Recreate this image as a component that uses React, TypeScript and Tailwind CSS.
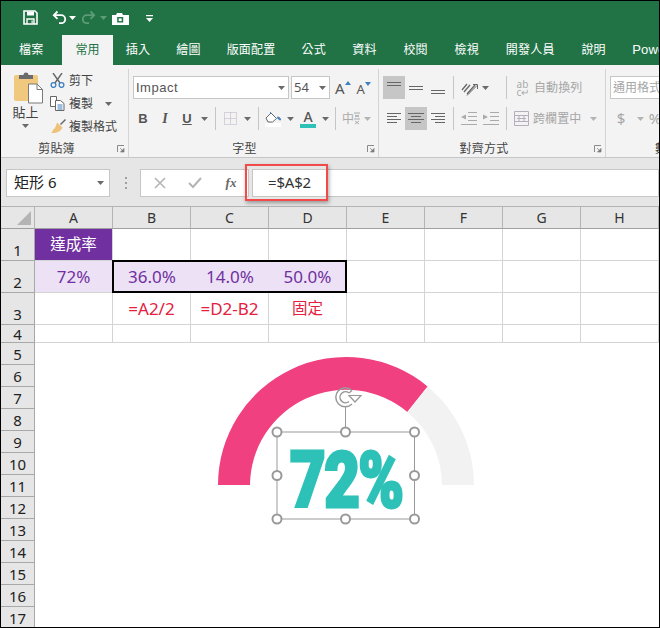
import type { ReactNode } from 'react';

const tabsLeft = ['插入', '繪圖', '版面配置', '公式'];
const tabsRight = ['資料', '校閱', '檢視', '開發人員', '說明'];
const columns = ['A', 'B', 'C', 'D', 'E', 'F', 'G', 'H'];
const lowerRows = [5, 6, 7, 8, 9, 10, 11, 12, 13, 14, 15, 16, 17];

function Caret({ color = '#6a6a6a' }: { color?: string }) {
  return (
    <svg width="7" height="4" viewBox="0 0 7 4" className="shrink-0">
      <path d="M0 0h7L3.5 4z" fill={color} />
    </svg>
  );
}

function Slot({ className, children }: { className: string; children?: ReactNode }) {
  return <div className={`flex h-full shrink-0 items-center justify-center ${className}`}>{children}</div>;
}

function Sep() {
  return <div className="h-[23px] w-px bg-[#c6c6c6]" />;
}

function Launcher() {
  return (
    <svg width="8" height="8" viewBox="0 0 8 8" className="absolute bottom-[4px] right-[3px]">
      <path d="M.5 7V.5H7" fill="none" stroke="#8a8a8a" />
      <path d="M3 3l3 3M7 3.5V7H3.5z" fill="#7a7a7a" stroke="#7a7a7a" strokeWidth=".7" />
    </svg>
  );
}

function Group({ className, label, labelClass, launcher, children }: { className: string; label: string; labelClass: string; launcher?: boolean; children: ReactNode }) {
  return (
    <div className={`relative flex shrink-0 flex-col ${className}`}>
      <div className="h-[71px] shrink-0">{children}</div>
      <div className={`whitespace-nowrap text-[12px] leading-[18px] tracking-[0.2px] text-[#444] ${labelClass}`}>{label}</div>
      {launcher && <Launcher />}
    </div>
  );
}

function AlignIcon({ lines }: { lines: [number, number, number][] }) {
  return (
    <svg width="16" height="16" viewBox="0 0 16 16">
      {lines.map(([x, y, w]) => (
        <rect key={`${x}-${y}`} x={x} y={y} width={w} height="1" fill="#666" />
      ))}
    </svg>
  );
}

function RowHead({ label, className = 'leading-[20px]' }: { label: number; className?: string }) {
  return (
    <div className={`flex items-end justify-center border-r border-b border-r-[#a8a8a8] border-b-[#a8a8a8] bg-[#e6e6e6] text-[15px] text-[#222] ${className}`}>
      {label}
    </div>
  );
}

function Cell({ className = '', children }: { className?: string; children?: ReactNode }) {
  return (
    <div className={`flex items-center justify-center border-r border-b border-[#d4d4d4] text-[15.5px] ${className}`}>{children}</div>
  );
}

export default function App() {
  return (
    <div className="relative h-[628px] w-[660px] overflow-hidden border border-black bg-white font-['Noto_Sans','Noto_Sans_CJK_TC',sans-serif] text-[#444]">
      {/* title bar and tabs */}
      <div className="h-[64px] bg-[#217346] text-white">
        <div className="flex h-[34px] items-center pb-[2px]">
          <svg width="15" height="15" viewBox="0 0 15 15" className="ml-[22px]">
            <path d="M1 1h11l2 2v11H1z" fill="none" stroke="#fff" strokeWidth="1.6" />
            <path d="M4 1.5h7v4H4z" fill="#fff" />
            <path d="M4 14V9h7v5" fill="none" stroke="#fff" strokeWidth="1.4" />
            <path d="M8.5 10.5h1.2v3H8.5z" fill="#fff" />
          </svg>
          <svg width="15" height="14" viewBox="0 0 15 14" className="ml-[14px]">
            <path d="M5.5 1.5L1.8 5.2l3.7 3.7M2.5 5.2h6.7a4 4 0 0 1 0 8H7" fill="none" stroke="#fff" strokeWidth="1.8" />
          </svg>
          <div className="ml-[2px] mt-[2px]"><Caret color="#fff" /></div>
          <svg width="15" height="14" viewBox="0 0 15 14" className="ml-[5px]">
            <path d="M9.5 1.5l3.7 3.7-3.7 3.7M12.5 5.2H5.8a4 4 0 0 0 0 8H8" fill="none" stroke="#5c9c78" strokeWidth="1.8" />
          </svg>
          <div className="ml-[4px] mt-[2px]"><Caret color="#5c9c78" /></div>
          <svg width="17" height="12" viewBox="0 0 17 12" className="ml-[5px] mt-[3px]">
            <path d="M0 2h4l1-2h5l1 2h6v10H0z" fill="#fff" />
            <rect x="5.2" y="4" width="6" height="5.5" fill="#217346" />
            <rect x="6.7" y="5.4" width="3" height="2.7" fill="#fff" />
          </svg>
          <svg width="7" height="8" viewBox="0 0 7 8" className="ml-[17px] mt-[3px]">
            <path d="M0 0h7v1.2H0zM0 3h7L3.5 7z" fill="#fff" />
          </svg>
        </div>
        <div className="flex h-[30px] items-stretch whitespace-nowrap text-[12px] tracking-[0.2px]">
          <div className="flex items-center pl-[18px] pr-[19px]">檔案</div>
          <div className="flex items-center bg-[#f3f3f3] px-[13px] text-[#217346]">常用</div>
          {tabsLeft.map((tab) => (
            <div key={tab} className="flex items-center px-[13px]">{tab}</div>
          ))}
          {tabsRight.map((tab) => (
            <div key={tab} className="flex items-center px-[13.4px]">{tab}</div>
          ))}
          <div className="flex items-center pl-[13px] font-['Liberation_Sans',sans-serif] text-[13px]">Powe</div>
        </div>
      </div>

      {/* ribbon */}
      <div className="flex h-[93px] overflow-hidden border-b border-[#c6c6c6] bg-[#f3f3f3] pt-[4px] text-[12px] text-[#444]">
        <Group className="w-[128px] border-r border-[#d4d4d4]" label="剪貼簿" labelClass="pr-[16px] text-center" launcher>
          <div className="flex h-full">
            <div className="flex w-[49px] flex-col items-center pt-[3px]">
              <svg width="29" height="32" viewBox="0 0 29 32" className="ml-[6px]">
                <rect x="0" y="3" width="24" height="26" rx="2" fill="#f0c97f" />
                <path d="M5 3h14v4H5z" fill="#6b6b6b" />
                <path d="M9.5 3a2.5 2.5 0 0 1 5 0z" fill="#6b6b6b" />
                <path d="M14.5 12h8.5l5.5 5.5V31h-14z" fill="#fff" stroke="#7a7a7a" />
                <path d="M23 12v5.5h5.5" fill="none" stroke="#7a7a7a" />
              </svg>
              <div className="-mt-[2px] text-[13px] leading-[20px]">貼上</div>
              <div className="mt-[2px]"><Caret /></div>
            </div>
            <div className="flex flex-col">
              <div className="flex h-[23px] items-center">
                <svg width="15" height="15" viewBox="0 0 15 15">
                  <path d="M3 0l7 10M12 0L5 10" stroke="#666" strokeWidth="1.4" />
                  <circle cx="3.5" cy="12" r="2.4" fill="none" stroke="#3f7fbf" strokeWidth="1.3" />
                  <circle cx="11.5" cy="12" r="2.4" fill="none" stroke="#3f7fbf" strokeWidth="1.3" />
                </svg>
                <span className="ml-[4px]">剪下</span>
              </div>
              <div className="flex h-[23px] items-center">
                <svg width="15" height="15" viewBox="0 0 15 15">
                  <path d="M.5.500h6v10h-6z" fill="#fff" stroke="#666" />
                  <path d="M5.500 4.500h5l3.500 3v7H5.500z" fill="#fff" stroke="#666" />
                  <path d="M7.500 9h5M7.500 11h5M7.500 13h5" stroke="#3f7fbf" />
                </svg>
                <span className="ml-[4px]">複製</span>
                <div className="ml-[12px]"><Caret /></div>
              </div>
              <div className="flex h-[23px] items-center">
                <svg width="16" height="15" viewBox="0 0 16 15">
                  <path d="M10 5l2-2 3-3 1 1-3 3-2 2z" fill="#666" />
                  <path d="M7 3.500l5.500 5C11 12 7 14.500 1 14c1.500-.7 1.700-2.200 1.700-3C4.500 10 6 7.500 7 3.500z" fill="#eec27a" />
                </svg>
                <span className="ml-[3px]">複製格式</span>
              </div>
            </div>
          </div>
        </Group>

        <Group className="w-[250px] border-r border-[#d4d4d4]" label="字型" labelClass="pr-[18px] text-center" launcher>
          <div className="mt-[7px] flex h-[23px] items-center pl-[4px]">
            <div className="flex h-[23px] w-[156px] items-center justify-between border border-[#c6c6c6] bg-white pl-[2px] pr-[3px] font-['Liberation_Sans',sans-serif] text-[13px] tracking-[0.5px] text-[#555]">
              Impact
              <Caret />
            </div>
            <div className="ml-[2px] flex h-[23px] w-[39px] items-center justify-between border border-[#c6c6c6] bg-white pl-[2px] pr-[3px] text-[13px] text-[#555]">
              54
              <Caret />
            </div>
            <div className="ml-[5px] flex items-start text-[15px] leading-[16px] text-[#555]">
              A
              <svg width="6" height="4" viewBox="0 0 6 4" className="mt-[1px]"><path d="M0 4h6L3 0z" fill="#3f7fbf" /></svg>
            </div>
            <div className="ml-[6px] mt-[2px] flex items-start text-[13px] leading-[14px] text-[#555]">
              A
              <svg width="6" height="4" viewBox="0 0 6 4"><path d="M0 0h6L3 4z" fill="#3f7fbf" /></svg>
            </div>
          </div>
          <div className="mt-[8px] flex h-[23px] items-center pl-[3px]">
            <Slot className="w-[22px] font-['Liberation_Sans',sans-serif] text-[13px] font-bold text-[#555]">B</Slot>
            <Slot className="w-[22px] font-['Liberation_Serif',serif] text-[14px] font-bold italic text-[#555]">I</Slot>
            <Slot className="w-[22px] font-['Liberation_Sans',sans-serif] text-[13px] font-bold text-[#555] underline">U</Slot>
            <Slot className="w-[12px]"><Caret /></Slot>
            <Slot className="w-[10px]"><Sep /></Slot>
            <Slot className="w-[21px]">
              <svg width="13" height="13" viewBox="0 0 13 13">
                <path d="M.5.500h12v12H.5zM6.500.500v12M.5 6.500h12" fill="none" stroke="#b9b0c4" strokeDasharray="1 1" />
              </svg>
            </Slot>
            <Slot className="w-[12px]"><Caret /></Slot>
            <Slot className="w-[10px]"><Sep /></Slot>
            <Slot className="w-[21px]">
              <svg width="17" height="16" viewBox="0 0 17 16">
                <path d="M1 7l5-5 5.500 5.500-4 3.500H3z" fill="#fff" stroke="#666" />
                <path d="M5 1l2 2M12.500 6c2 0 3 1.500 3 3-1 0-3-1-3-3z" fill="#3f7fbf" stroke="#3f7fbf" />
                <rect x="0" y="12" width="16" height="4" fill="#fff" />
              </svg>
            </Slot>
            <Slot className="w-[12px]"><Caret /></Slot>
            <Slot className="w-[24px]">
              <div className="flex flex-col items-center">
                <span className="text-[14px] font-medium leading-[13px] text-[#555]">A</span>
                <div className="mt-[1px] h-[4px] w-[16px] bg-[#2dc1b8]" />
              </div>
            </Slot>
            <Slot className="w-[10px]"><Caret /></Slot>
            <Slot className="w-[10px]"><Sep /></Slot>
            <Slot className="w-[22px] text-[12px] text-[#aaa]">
              中
              <svg width="6" height="13" viewBox="0 0 6 13">
                <path d="M0 1h6M1 3l4 2M5 3L1 5M0 7h6M1 9l4 3M5 9l-4 3" stroke="#aaa" fill="none" />
              </svg>
            </Slot>
            <Slot className="w-[10px]"><Caret color="#b4b4b4" /></Slot>
          </div>
        </Group>

        <Group className="w-[227px] border-r border-[#d4d4d4]" label="對齊方式" labelClass="pr-[16px] text-center" launcher>
          <div className="mt-[7px] flex h-[23px] items-center pl-[4px]">
            <Slot className="w-[22px] bg-[#c6c6c6]"><AlignIcon lines={[[1, 2, 14], [1, 5, 14]]} /></Slot>
            <Slot className="w-[22px]"><AlignIcon lines={[[1, 6, 14], [1, 9, 14]]} /></Slot>
            <Slot className="w-[22px]"><AlignIcon lines={[[1, 10, 14], [1, 13, 14]]} /></Slot>
            <Slot className="w-[8px]"><Sep /></Slot>
            <Slot className="w-[24px]">
              <svg width="17" height="16" viewBox="0 0 17 16">
                <path d="M1 10l5-6M3 12l6-7M6 14l8-9" fill="none" stroke="#666" strokeWidth="1.300" />
                <path d="M6 15.500L16 5.500M12 4.500h4.500V9" fill="none" stroke="#666" />
              </svg>
            </Slot>
            <Slot className="w-[8px]"><Caret /></Slot>
            <Slot className="ml-[13px] w-[9px]"><Sep /></Slot>
            <Slot className="ml-[4px] w-[16px]">
              <div className="flex flex-col text-[10px] leading-[8px] text-[#aaa]">
                <span>ab</span>
                <span>c↵</span>
              </div>
            </Slot>
            <span className="ml-[3px] text-[12px] tracking-[0.1px] text-[#a6a6a6]">自動換列</span>
          </div>
          <div className="mt-[8px] flex h-[23px] items-center pl-[4px]">
            <Slot className="w-[22px]"><AlignIcon lines={[[1, 2, 14], [1, 5, 10], [1, 8, 14], [1, 11, 10]]} /></Slot>
            <Slot className="w-[22px] bg-[#c6c6c6]"><AlignIcon lines={[[0, 2, 16], [3, 5, 10], [0, 8, 16], [3, 11, 10]]} /></Slot>
            <Slot className="w-[22px]"><AlignIcon lines={[[1, 2, 14], [5, 5, 10], [1, 8, 14], [5, 11, 10]]} /></Slot>
            <Slot className="w-[8px]"><Sep /></Slot>
            <Slot className="ml-[4px] w-[16px]">
              <svg width="16" height="13" viewBox="0 0 16 13">
                <path d="M7 .5h9M7 4.500h9M7 8.500h9M0 12.500h16" stroke="#aaa" />
                <path d="M5 2.500v5L0 5z" fill="#aaa" />
              </svg>
            </Slot>
            <Slot className="ml-[6px] w-[16px]">
              <svg width="16" height="13" viewBox="0 0 16 13">
                <path d="M7 .5h9M7 4.500h9M7 8.500h9M0 12.500h16" stroke="#aaa" />
                <path d="M0 2.500v5L5 5z" fill="#aaa" />
              </svg>
            </Slot>
            <Slot className="ml-[3px] w-[9px]"><Sep /></Slot>
            <Slot className="ml-[3px] w-[15px]">
              <svg width="15" height="15" viewBox="0 0 15 15">
                <path d="M.5.500h14v14H.5zM.5 4.500h14M.5 10.500h14M5 4.500v6M10 4.500v6M3 7.500h9" fill="none" stroke="#b5aebd" />
              </svg>
            </Slot>
            <span className="ml-[4px] text-[12px] tracking-[0.1px] text-[#a6a6a6]">跨欄置中</span>
            <div className="ml-[9px]"><Caret color="#b4b4b4" /></div>
          </div>
        </Group>

        <Group className="w-[60px]" label="數值" labelClass="pl-[49px]">
          <div className="ml-[4px] mt-[7px] flex h-[23px] w-[70px] items-center border border-[#c6c6c6] bg-white pl-[2px] text-[12px] text-[#a6a6a6]">
            <span className="whitespace-nowrap">通用格式</span>
          </div>
          <div className="mt-[8px] flex h-[23px] items-center text-[15px] text-[#a6a6a6]">
            <Slot className="ml-[9px] w-[12px]">$</Slot>
            <Slot className="ml-[9px] w-[8px]"><Caret color="#b4b4b4" /></Slot>
            <Slot className="ml-[5px] w-[12px]">%</Slot>
          </div>
        </Group>
      </div>

      {/* formula bar */}
      <div className="flex h-[49px] items-center border-b border-[#b4b4b4] bg-[#e6e6e6] pt-[1px]">
        <div className="ml-[5px] flex h-[28px] w-[104px] items-center justify-between border border-[#c6c6c6] bg-white pl-[7px] pr-[5px] text-[15px] text-[#222]">
          矩形 6
          <Caret />
        </div>
        <div className="ml-[15px] flex w-[4px] flex-col gap-[3px]">
          <div className="h-[2px] w-[2px] bg-[#a0a0a0]" />
          <div className="h-[2px] w-[2px] bg-[#a0a0a0]" />
          <div className="h-[2px] w-[2px] bg-[#a0a0a0]" />
        </div>
        <div className="ml-[11px] flex h-[28px] w-[109px] items-center border border-[#c6c6c6] bg-white">
          <Slot className="w-[36px] pl-[1px]">
            <svg width="12" height="12" viewBox="0 0 12 12"><path d="M1 1l10 10M11 1L1 11" stroke="#b4b4b4" strokeWidth="1.6" /></svg>
          </Slot>
          <Slot className="w-[36px]">
            <svg width="14" height="12" viewBox="0 0 14 12"><path d="M1 6l4 4 8-9" fill="none" stroke="#b4b4b4" strokeWidth="2" /></svg>
          </Slot>
          <Slot className="w-[36px] font-['Liberation_Serif',serif] text-[13px] font-bold italic text-[#666]">fx</Slot>
        </div>
        <div className="ml-[3px] flex h-[28px] flex-1 items-center border border-[#c6c6c6] bg-white pl-[15px] text-[15px] tracking-[-0.2px] text-[#333]">=$A$2</div>
      </div>

      {/* sheet */}
      <div className="grid grid-cols-[34px_repeat(8,78px)] grid-rows-[22px_32px_32px_32px_18px_repeat(13,22px)]">
        <div className="flex items-end justify-end border-r border-b border-r-[#b4b4b4] border-b-[#a0a0a0] bg-[#e6e6e6] pb-[3px] pr-[3px]">
          <svg width="14" height="14" viewBox="0 0 14 14"><path d="M14 0v14H0z" fill="#b4b4b4" /></svg>
        </div>
        {columns.map((col) => (
          <div key={col} className="flex items-center justify-center border-r border-b border-r-[#b4b4b4] border-b-[#a0a0a0] bg-[#e6e6e6] text-[14px] text-[#333]">
            {col}
          </div>
        ))}

        <RowHead label={1} />
        <Cell className="bg-[#7030a0] text-white">達成率</Cell>
        {columns.slice(1).map((col) => <Cell key={col} />)}

        <RowHead label={2} />
        <Cell className="bg-[#ede1f5] text-[17px] text-[#7030a0]">72%</Cell>
        <div className="z-10 col-span-3 -ml-px -mt-px flex h-[33px] border-2 border-black bg-[#ede1f5] text-[17px] text-[#7030a0]">
          <div className="flex w-[76px] items-center justify-center">36.0%</div>
          <div className="flex w-[80px] items-center justify-center">14.0%</div>
          <div className="flex w-[75px] items-center justify-center">50.0%</div>
        </div>
        {columns.slice(4).map((col) => <Cell key={col} />)}

        <RowHead label={3} />
        <Cell />
        <Cell className="text-[17px] text-[#e5203e]">=A2/2</Cell>
        <Cell className="text-[17px] text-[#e5203e]">=D2-B2</Cell>
        <Cell className="text-[#e5203e]">固定</Cell>
        {columns.slice(4).map((col) => <Cell key={col} />)}

        <RowHead label={4} className="leading-[16px]" />
        {columns.map((col) => <Cell key={col} />)}

        {lowerRows.map((row) => (
          <div key={row} className="contents">
            <RowHead label={row} />
            {row === 5 && <div className="col-span-8 row-span-13 bg-white" />}
          </div>
        ))}
      </div>

      {/* highlight around the formula */}
      <div className="absolute left-[244px] top-[163px] h-[37px] w-[83px] border-2 border-[#f04a4a] shadow-[1px_2px_4px_rgba(0,0,0,0.35)]" />

      {/* gauge shape */}
      <svg width="270" height="180" viewBox="210 350 270 180" className="absolute left-[209px] top-[349px]">
        <path d="M218 485A128 128 0 0 1 427.600 386.400L407.300 411.900A96 96 0 0 0 250 485z" fill="#f04080" />
        <path d="M427.600 386.400A128 128 0 0 1 474 485H442A96 96 0 0 0 407.300 411.900z" fill="#f2f2f2" />
        <path d="M345.500 406V432M277 432H414.500V519H277z" fill="none" stroke="#999" />
        <path d="M352 390.500A9.500 9.500 0 1 0 352 404" fill="none" stroke="#999" strokeWidth="1.500" />
        <path d="M349 393A5.500 5.500 0 1 0 349 401.500" fill="none" stroke="#999" strokeWidth="1.500" />
        <path d="M352 390.500L349 393" stroke="#999" strokeWidth="1.200" />
        <path d="M349 395.500h12l-6 6.500z" fill="#fff" stroke="#999" strokeWidth="1.200" />
        {[[277, 432], [345.500, 432], [414.500, 432], [277, 475.500], [414.500, 475.500], [277, 519], [345.500, 519], [414.500, 519]].map(([x, y]) => (
          <circle key={`${x}-${y}`} cx={x} cy={y} r="4.500" fill="#fff" stroke="#999" strokeWidth="2" />
        ))}
      </svg>
      <div className="absolute left-[276px] top-[437px] flex h-[87px] w-[138px] items-center justify-center overflow-hidden">
        <span className="origin-center scale-x-[0.8] font-['Roboto',sans-serif] text-[77px] font-black leading-none tracking-[-2px] whitespace-nowrap text-[#2dc1b8] [-webkit-text-stroke:3px_#2dc1b8]">72%</span>
      </div>
    </div>
  );
}
